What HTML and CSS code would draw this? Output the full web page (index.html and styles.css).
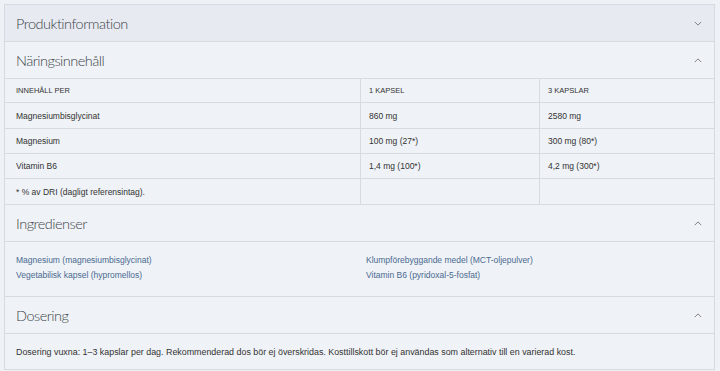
FILE: index.html
```html
<!DOCTYPE html>
<html lang="sv">
<head>
<meta charset="utf-8">
<title>Produktinformation</title>
<link rel="stylesheet" href="styles.css">
</head>
<body>
<div class="accordion">
  <section class="panel">
    <div class="panel-head closed">
      <span class="panel-title">Produktinformation</span>
      <svg class="chev" viewBox="0 0 10 6" width="8" height="5"><path d="M1 1l4 4 4-4" fill="none" stroke="#666" stroke-width="1"/></svg>
    </div>
  </section>

  <section class="panel">
    <div class="panel-head">
      <span class="panel-title">Näringsinnehåll</span>
      <svg class="chev" viewBox="0 0 10 6" width="8" height="5"><path d="M1 5l4-4 4 4" fill="none" stroke="#666" stroke-width="1"/></svg>
    </div>
    <table class="nutrition">
      <thead>
        <tr><th>INNEHÅLL PER</th><th>1 KAPSEL</th><th>3 KAPSLAR</th></tr>
      </thead>
      <tbody>
        <tr class="first"><td>Magnesiumbisglycinat</td><td>860 mg</td><td>2580 mg</td></tr>
        <tr><td>Magnesium</td><td>100 mg (27*)</td><td>300 mg (80*)</td></tr>
        <tr><td>Vitamin B6</td><td>1,4 mg (100*)</td><td>4,2 mg (300*)</td></tr>
        <tr class="note"><td>* % av DRI (dagligt referensintag).</td><td></td><td></td></tr>
      </tbody>
    </table>
  </section>

  <section class="panel">
    <div class="panel-head">
      <span class="panel-title">Ingredienser</span>
      <svg class="chev" viewBox="0 0 10 6" width="8" height="5"><path d="M1 5l4-4 4 4" fill="none" stroke="#666" stroke-width="1"/></svg>
    </div>
    <div class="ingredients">
      <a href="#">Magnesium (magnesiumbisglycinat)</a>
      <a href="#">Klumpförebyggande medel (MCT-oljepulver)</a>
      <a href="#">Vegetabilisk kapsel (hypromellos)</a>
      <a href="#">Vitamin B6 (pyridoxal-5-fosfat)</a>
    </div>
  </section>

  <section class="panel">
    <div class="panel-head">
      <span class="panel-title">Dosering</span>
      <svg class="chev" viewBox="0 0 10 6" width="8" height="5"><path d="M1 5l4-4 4 4" fill="none" stroke="#666" stroke-width="1"/></svg>
    </div>
    <p class="dosage">Dosering vuxna: 1–3 kapslar per dag. Rekommenderad dos bör ej överskridas. Kosttillskott bör ej användas som alternativ till en varierad kost.</p>
  </section>
</div>
</body>
</html>
```

FILE: styles.css
```css
html, body {
  margin: 0;
  background: #eef1f5;
}

body {
  padding: 4px 5px 0 4px;
  font-family: "Liberation Sans", Arial, sans-serif;
  color: #333;
}

.accordion {
  border: 1px solid #d7dbe1;
  background: #eff2f6;
}

.panel + .panel {
  border-top: 1px solid #d7dbe1;
}

.panel-head {
  height: 36px;
  display: flex;
  align-items: center;
  justify-content: space-between;
  padding: 0 12px 0 11px;
  background: #eff2f6;
}

.panel-head.closed {
  background: #e7eaf1;
}

.panel-title {
  font-family: "Lato", sans-serif;
  font-weight: 300;
  font-size: 14.5px;
  color: #40444a;
  letter-spacing: -0.5px;
}

.chev {
  display: block;
}

/* nutrition facts table */
.nutrition {
  width: 100%;
  border-collapse: collapse;
  table-layout: fixed;
  font-size: 8.5px;
  color: #333;
}

.nutrition th,
.nutrition td {
  border-top: 1px solid #d7dbe1;
  text-align: left;
  padding: 0 8px;
  height: 24px;
  font-weight: normal;
}

.nutrition th {
  font-size: 7.5px;
  height: 23px;
}

.nutrition .first td,
.nutrition .note td {
  height: 25px;
}

.nutrition th:first-child,
.nutrition td:first-child {
  width: 336px;
  padding-left: 11px;
}

.nutrition th:nth-child(2),
.nutrition td:nth-child(2) {
  width: 162px;
}

.nutrition th + th,
.nutrition td + td {
  border-left: 1px solid #d7dbe1;
}

/* ingredient links in two columns */
.ingredients {
  border-top: 1px solid #d7dbe1;
  display: grid;
  grid-template-columns: 350px 1fr;
  row-gap: 5px;
  padding: 13px 11px 16px;
  font-size: 8.5px;
}

.ingredients a {
  color: #4a6a92;
  text-decoration: none;
}

.dosage {
  margin: 0;
  border-top: 1px solid #d7dbe1;
  padding: 13px 11px 12px;
  font-size: 8.9px;
  color: #333;
}
```
